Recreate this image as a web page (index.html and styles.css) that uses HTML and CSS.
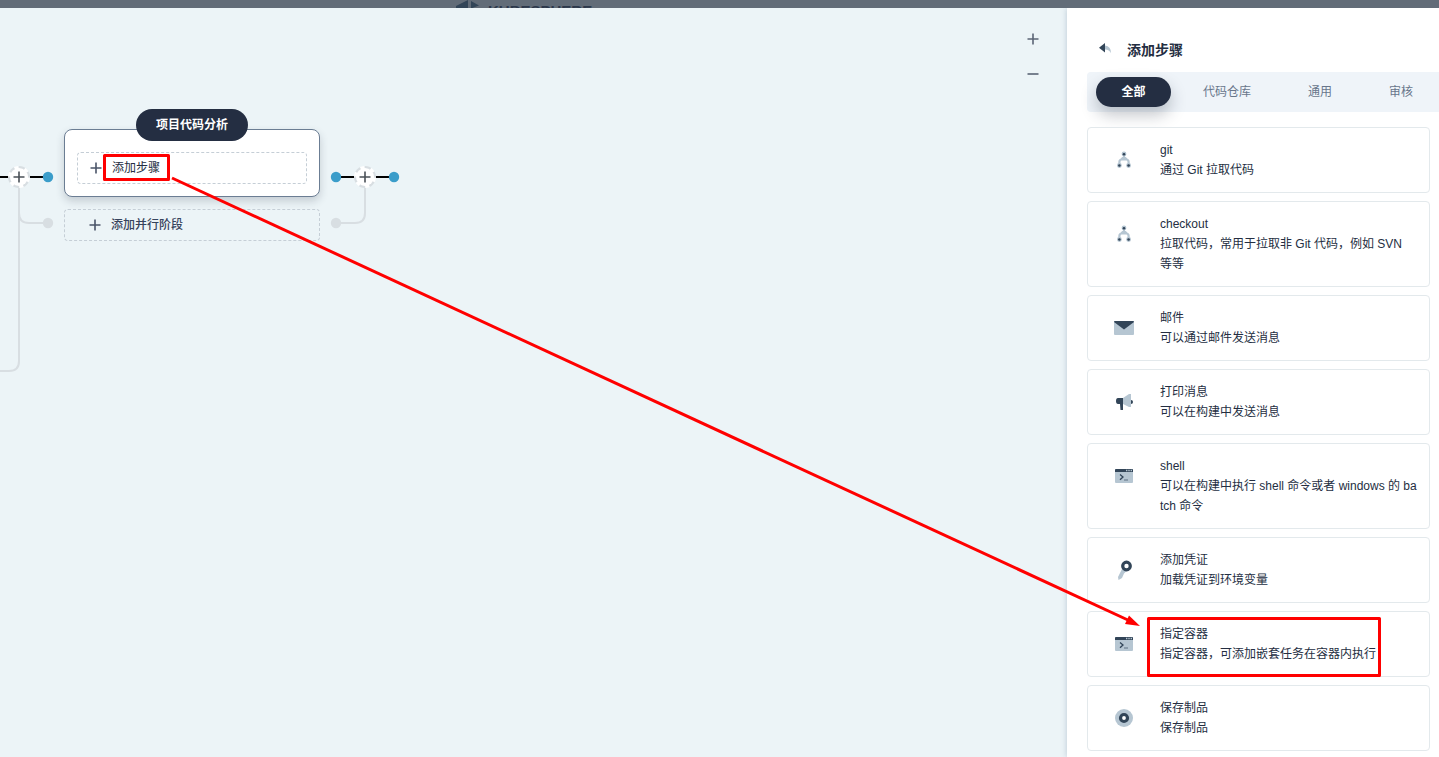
FILE: index.html
```html
<!DOCTYPE html>
<html lang="zh-CN">
<head>
    <meta charset="UTF-8">
    <meta name="viewport" content="width=device-width, initial-scale=1.0">
    <title>KubeSphere</title>
    <link rel="stylesheet" href="styles.css">
</head>
<body>

    <svg class="symbols" aria-hidden="true">
        <symbol id="plus" viewBox="0 0 12 12">
            <path d="M6 0.500v11M0.500 6h11" fill="none" stroke="currentColor" stroke-width="1.6"/>
        </symbol>
        <symbol id="branch" viewBox="0 0 20 20">
            <path d="M10 4v4.500M5.400 15v-3q0-2.500 2.500-2.500h4.200q2.500 0 2.500 2.500V15M7 9.500L10 7l3 2.500" fill="none" stroke="#b6c6d2" stroke-width="2.200"/>
            <circle cx="10" cy="4" r="2.400" fill="#b6c6d2"/>
            <circle cx="5.400" cy="15.500" r="2.400" fill="#b6c6d2"/>
            <circle cx="14.600" cy="15.500" r="2.400" fill="#b6c6d2"/>
            <circle cx="10" cy="4.200" r="1.300" fill="#324558"/>
            <circle cx="5.400" cy="15.500" r="1.300" fill="#324558"/>
            <circle cx="14.600" cy="15.500" r="1.300" fill="#324558"/>
        </symbol>
        <symbol id="terminal" viewBox="0 0 20 20">
            <rect x="1" y="3" width="18" height="14" rx="1" fill="#b6c6d2"/>
            <path d="M1 6V4q0-1 1-1h16q1 0 1 1v2z" fill="#324558"/>
            <path d="M12 4.500h1.400M14.300 4.500h1.400M16.600 4.500H18" stroke="#b6c6d2" stroke-width="1.400"/>
            <path d="M6 8.500l3 2.500-3 2.800" fill="none" stroke="#324558" stroke-width="1.300"/>
            <path d="M10 14h4" stroke="#6d7f90" stroke-width="1.200"/>
        </symbol>
    </svg>

    <header class="topbar">
        <svg class="logo-mark" width="26" height="24" viewBox="0 0 26 24" aria-hidden="true">
            <path d="M0 6L12 0v23L0 17z" fill="#324558"/>
            <path d="M15 1l8 4.500-8 3z" fill="#324558"/>
        </svg>
        <span class="logo-text">KUBESPHERE</span>
    </header>

    <div class="workspace">
        <main class="canvas">
            <svg class="lines" width="420" height="400" viewBox="0 8 420 400" aria-hidden="true">
                <g fill="none" stroke="#d8dee2" stroke-width="2">
                    <path d="M19 187v174q0 10-10 10H0"/>
                    <path d="M19 187v26q0 10 10 10h19"/>
                    <path d="M365 187v26q0 10-10 10h-19"/>
                </g>
                <path d="M0 177h9M30 177h18M336 177h18M376 177h18" stroke="#000" stroke-width="2"/>
                <g fill="#3b9dca">
                    <circle cx="48" cy="177" r="5.200"/>
                    <circle cx="336" cy="177" r="5.200"/>
                    <circle cx="394" cy="177" r="5.200"/>
                </g>
                <g fill="#d8dee2">
                    <circle cx="48" cy="223" r="5.200"/>
                    <circle cx="336" cy="223" r="5.200"/>
                </g>
            </svg>

            <button type="button" class="node-add node-left" aria-label="添加阶段"><svg width="12" height="12"><use href="#plus"/></svg></button>
            <button type="button" class="node-add node-right" aria-label="添加阶段"><svg width="12" height="12"><use href="#plus"/></svg></button>

            <section class="stage">
                <div class="stage-card">
                    <h2 class="stage-title">项目代码分析</h2>
                    <button type="button" class="add-btn add-step"><svg width="12" height="12"><use href="#plus"/></svg>添加步骤</button>
                </div>
                <button type="button" class="add-btn add-parallel"><svg width="12" height="12"><use href="#plus"/></svg>添加并行阶段</button>
            </section>

            <div class="zoom-tools">
                <button type="button" aria-label="放大"><svg width="12" height="14"><use href="#plus"/></svg></button>
                <button type="button" aria-label="缩小"><svg width="12" height="14" viewBox="0 0 12 14"><path d="M0.500 7h11" stroke="currentColor" stroke-width="1.600"/></svg></button>
            </div>
        </main>

        <aside class="panel">
            <div class="panel-header">
                <button type="button" class="back" aria-label="返回">
                    <svg width="14" height="14" viewBox="0 0 14 14">
                        <path d="M7 2.500q6 .5 6 7.800-1.500-3.800-6-3.800z" fill="#b6c6d2"/>
                        <path d="M1 4.800L7 0v9.600z" fill="#324558"/>
                    </svg>
                </button>
                <h1>添加步骤</h1>
            </div>

            <nav class="tabs">
                <button type="button" class="tab active">全部</button>
                <button type="button" class="tab">代码仓库</button>
                <button type="button" class="tab">通用</button>
                <button type="button" class="tab">审核</button>
            </nav>

            <div class="steps">
                <button type="button" class="step">
                    <span class="icon"><svg width="20" height="20"><use href="#branch"/></svg></span>
                    <span class="text"><span>git</span><span>通过 Git 拉取代码</span></span>
                </button>
                <button type="button" class="step">
                    <span class="icon"><svg width="20" height="20"><use href="#branch"/></svg></span>
                    <span class="text"><span>checkout</span><span>拉取代码，常用于拉取非 Git 代码，例如 SVN 等等</span></span>
                </button>
                <button type="button" class="step">
                    <span class="icon">
                        <svg width="20" height="20" viewBox="0 0 20 20">
                            <rect y="3" width="20" height="14" rx="1" fill="#b6c6d2"/>
                            <path d="M0 4q0-1 1-1h18q1 0 1 1l-10 7.500z" fill="#324558"/>
                        </svg>
                    </span>
                    <span class="text"><span>邮件</span><span>可以通过邮件发送消息</span></span>
                </button>
                <button type="button" class="step">
                    <span class="icon">
                        <svg width="20" height="20" viewBox="0 0 20 20">
                            <path d="M17 8q2 0 2 2t-2 2z" fill="#324558"/>
                            <path d="M9 6l6-4h2v13h-2l-6-3z" fill="#b6c6d2"/>
                            <path d="M9 6v12H6.500l-.5-6H4q-2 0-2-3t2-3z" fill="#324558"/>
                        </svg>
                    </span>
                    <span class="text"><span>打印消息</span><span>可以在构建中发送消息</span></span>
                </button>
                <button type="button" class="step">
                    <span class="icon"><svg width="20" height="20"><use href="#terminal"/></svg></span>
                    <span class="text"><span>shell</span><span>可以在构建中执行 shell 命令或者 windows 的 batch 命令</span></span>
                </button>
                <button type="button" class="step">
                    <span class="icon">
                        <svg width="20" height="20" viewBox="0 0 20 20">
                            <path d="M8.500 8l4 3-2.500 2.500-2 4.500-3.500 2-.5-3z" fill="#b6c6d2"/>
                            <circle cx="12.500" cy="6" r="3.800" fill="#fff" stroke="#324558" stroke-width="3.200"/>
                        </svg>
                    </span>
                    <span class="text"><span>添加凭证</span><span>加载凭证到环境变量</span></span>
                </button>
                <button type="button" class="step">
                    <span class="icon"><svg width="20" height="20"><use href="#terminal"/></svg></span>
                    <span class="text"><span>指定容器</span><span>指定容器，可添加嵌套任务在容器内执行</span></span>
                </button>
                <button type="button" class="step">
                    <span class="icon">
                        <svg width="20" height="20" viewBox="0 0 20 20">
                            <circle cx="10" cy="10" r="9" fill="#b6c6d2"/>
                            <circle cx="10" cy="10" r="3.500" fill="#fff" stroke="#324558" stroke-width="3.200"/>
                        </svg>
                    </span>
                    <span class="text"><span>保存制品</span><span>保存制品</span></span>
                </button>
            </div>
        </aside>
    </div>

    <!-- red marks: from the stage button to the container step -->
    <svg class="marks" width="1439" height="757" viewBox="0 0 1439 757" aria-hidden="true">
        <g fill="none" stroke="#f00" stroke-width="3" stroke-linejoin="round">
            <rect x="104.500" y="155.500" width="64" height="24"/>
            <rect x="1148.500" y="618.500" width="231" height="57"/>
            <path d="M172 178L1129 620.500"/>
        </g>
        <path d="M1140 626l-11-10.500-4 8.500z" fill="#f00"/>
    </svg>

</body>
</html>
```

FILE: styles.css
```css
* {
    box-sizing: border-box;
}

body {
    margin: 0;
    height: 100vh;
    display: flex;
    flex-direction: column;
    overflow: hidden;
    position: relative;
    font-family: "Liberation Sans", "Noto Sans CJK SC", sans-serif;
    font-size: 12px;
    line-height: 20px;
    color: #242e42;
}

h1, h2 {
    margin: 0;
}

button {
    font: inherit;
    color: inherit;
    background: none;
    border: none;
    padding: 0;
    margin: 0;
    cursor: pointer;
}

svg {
    display: block;
    flex: none;
}

.symbols {
    position: absolute;
    width: 0;
    height: 0;
}

/* top bar */
.topbar {
    position: relative;
    z-index: 1;
    height: 8px;
    flex: none;
    display: flex;
    align-items: flex-start;
    gap: 6px;
    padding-left: 456px;
    overflow: hidden;
    background-color: #626c78;
}

.logo-text {
    padding-top: 2px;
    font-size: 15px;
    line-height: 18px;
    font-weight: bold;
    color: #2c384b;
}

.workspace {
    flex: 1;
    display: flex;
    min-height: 0;
}

/* pipeline canvas */
.canvas {
    flex: 1;
    position: relative;
    background-color: #ecf4f7;
}

.lines {
    position: absolute;
    left: 0;
    top: 0;
}

.node-add {
    position: absolute;
    top: 158px;
    width: 22px;
    height: 22px;
    display: flex;
    align-items: center;
    justify-content: center;
    border: 2px dashed #d8dee2;
    border-radius: 50%;
    background-color: #fff;
    color: #4a5057;
}

.node-left {
    left: 8px;
}

.node-right {
    left: 354px;
}

.stage {
    position: absolute;
    left: 64px;
    top: 121px;
    width: 256px;
    display: flex;
    flex-direction: column;
    gap: 12px;
}

.stage-card {
    position: relative;
    padding: 22px 12px 12px;
    border: 1px solid #6b7d93;
    border-radius: 8px;
    background-color: #fff;
    box-shadow: 0 4px 8px rgba(36, 46, 66, 0.2);
}

.stage-title {
    position: absolute;
    top: -21px;
    left: 50%;
    transform: translateX(-50%);
    padding: 6px 20px;
    border-radius: 16px;
    background-color: #242e42;
    color: #fff;
    font-size: 12px;
    line-height: 20px;
    white-space: nowrap;
}

.add-btn {
    display: flex;
    align-items: center;
    gap: 10px;
    width: 100%;
    height: 32px;
    padding: 0 12px;
    border: 1px dashed #c5ced6;
    border-radius: 4px;
}

.add-btn svg {
    color: #4a5468;
}

.add-parallel {
    padding: 0 24px;
    font-weight: 500;
    color: #36435c;
}

.zoom-tools {
    position: absolute;
    top: 24px;
    right: 28px;
    display: flex;
    flex-direction: column;
    gap: 21px;
    color: #5b6475;
}

/* right panel */
.panel {
    position: relative;
    width: 372px;
    flex: none;
    padding-left: 20px;
    background-color: #fff;
    box-shadow: 0 0 6px rgba(36, 66, 110, 0.25);
}

.panel-header {
    display: flex;
    align-items: center;
    gap: 15px;
    height: 64px;
    padding: 20px 0 0 11px;
}

.panel-header h1 {
    font-size: 14px;
    line-height: 20px;
}

.tabs {
    display: flex;
    align-items: center;
    gap: 7px;
    height: 40px;
    padding-left: 9px;
    border-radius: 4px 0 0 4px;
    background-color: #eff4f9;
}

.tab {
    height: 30px;
    padding: 0 25px;
    border-radius: 15px;
    white-space: nowrap;
    color: #68768b;
}

.tab.active {
    min-width: 75px;
    background-color: #242e42;
    color: #fff;
    font-weight: bold;
    box-shadow: 0 8px 16px rgba(36, 46, 66, 0.28);
}

.steps {
    display: flex;
    flex-direction: column;
    gap: 8px;
    padding: 15px 9px 0 0;
}

.step {
    display: flex;
    align-items: flex-start;
    gap: 12px;
    padding: 12px;
    border: 1px solid #e3e9ec;
    border-radius: 4px;
    background-color: #fff;
    text-align: left;
}

.icon {
    width: 48px;
    height: 40px;
    flex: none;
    display: flex;
    align-items: center;
    justify-content: center;
}

.text {
    flex: 1;
    display: flex;
    flex-direction: column;
    word-break: break-all;
}

.marks {
    position: absolute;
    left: 0;
    top: 0;
    z-index: 2;
    pointer-events: none;
}
```
